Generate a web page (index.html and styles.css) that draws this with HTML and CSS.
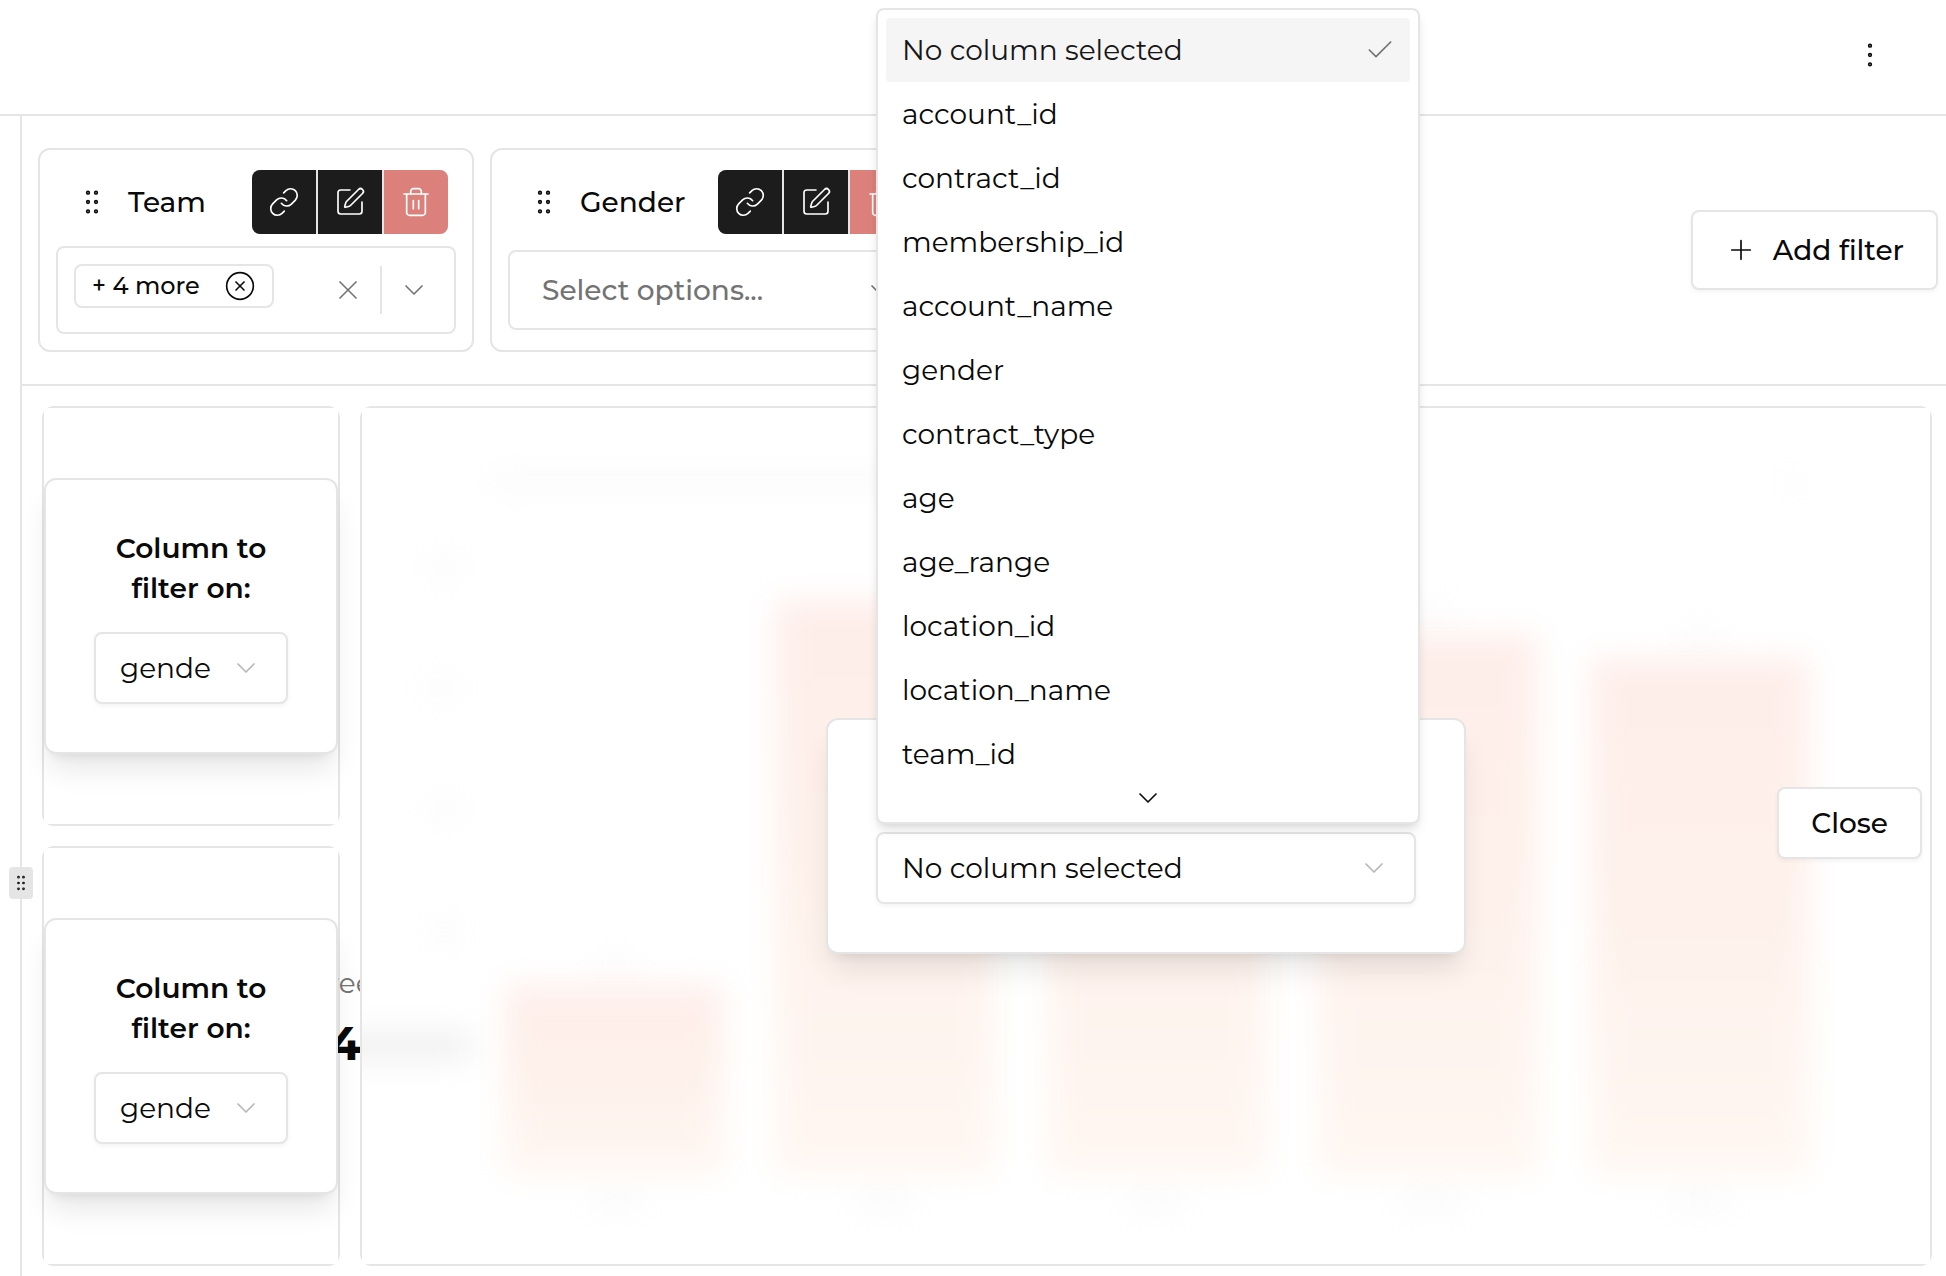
FILE: index.html
```html
<!DOCTYPE html>
<html lang="en">
<head>
<meta charset="utf-8">
<meta name="viewport" content="width=device-width, initial-scale=1">
<title>Dashboard filters</title>
<link rel="stylesheet" href="styles.css">
</head>
<body>
<svg class="sprite" aria-hidden="true">
  <symbol id="grip" viewBox="0 0 24 24"><circle cx="9" cy="12" r="1"/><circle cx="9" cy="5" r="1"/><circle cx="9" cy="19" r="1"/><circle cx="15" cy="12" r="1"/><circle cx="15" cy="5" r="1"/><circle cx="15" cy="19" r="1"/></symbol>
  <symbol id="more" viewBox="0 0 24 24"><circle cx="12" cy="12" r="1"/><circle cx="12" cy="5" r="1"/><circle cx="12" cy="19" r="1"/></symbol>
  <symbol id="link" viewBox="0 0 24 24"><path d="M10 13a5 5 0 0 0 7.54.54l3-3a5 5 0 0 0-7.07-7.07l-1.72 1.71"/><path d="M14 11a5 5 0 0 0-7.54-.54l-3 3a5 5 0 0 0 7.07 7.07l1.71-1.71"/></symbol>
  <symbol id="edit" viewBox="0 0 24 24"><path d="M12 3H5a2 2 0 0 0-2 2v14a2 2 0 0 0 2 2h14a2 2 0 0 0 2-2v-7"/><path d="M18.375 2.625a1 1 0 0 1 3 3l-9.013 9.014a2 2 0 0 1-.853.505l-2.873.84a.5.5 0 0 1-.62-.62l.84-2.873a2 2 0 0 1 .506-.852z"/></symbol>
  <symbol id="trash" viewBox="0 0 24 24"><path d="M3 6h18"/><path d="M19 6v14c0 1-1 2-2 2H7c-1 0-2-1-2-2V6"/><path d="M8 6V4c0-1 1-2 2-2h4c1 0 2 1 2 2v2"/><path d="M10 11v6"/><path d="M14 11v6"/></symbol>
  <symbol id="down" viewBox="0 0 24 24"><path d="m6 9 6 6 6-6"/></symbol>
  <symbol id="cross" viewBox="0 0 24 24"><path d="M18 6 6 18"/><path d="m6 6 12 12"/></symbol>
  <symbol id="circle-cross" viewBox="0 0 24 24"><circle cx="12" cy="12" r="10"/><path d="m15 9-6 6"/><path d="m9 9 6 6"/></symbol>
  <symbol id="plus" viewBox="0 0 24 24"><path d="M5 12h14"/><path d="M12 5v14"/></symbol>
  <symbol id="check" viewBox="0 0 24 24"><path d="M20 6 9 17l-5-5"/></symbol>
</svg>

<header class="topbar">
  <button class="icon-button" type="button" aria-label="More options"><svg class="icon"><use href="#more"/></svg></button>
</header>

<div class="shell">
  <aside class="rail">
    <button class="rail-handle" type="button" aria-label="Resize sidebar"><svg class="icon icon-small"><use href="#grip"/></svg></button>
  </aside>

  <main class="main">
    <section class="filters">
      <article class="filter filter-team">
        <div class="filter-head">
          <button class="icon-button" type="button" aria-label="Reorder Team"><svg class="icon"><use href="#grip"/></svg></button>
          <h2 class="filter-title">Team</h2>
          <div class="actions">
            <button class="action" type="button" aria-label="Link"><svg class="icon"><use href="#link"/></svg></button>
            <button class="action" type="button" aria-label="Edit"><svg class="icon"><use href="#edit"/></svg></button>
            <button class="action action-delete" type="button" aria-label="Delete"><svg class="icon"><use href="#trash"/></svg></button>
          </div>
        </div>
        <div class="multi multi-filled">
          <span class="tag">+ 4 more
            <button class="icon-button" type="button" aria-label="Remove 4 more"><svg class="icon"><use href="#circle-cross"/></svg></button>
          </span>
          <button class="icon-button muted multi-clear" type="button" aria-label="Clear"><svg class="icon"><use href="#cross"/></svg></button>
          <span class="divider"></span>
          <button class="icon-button muted" type="button" aria-label="Open Team options"><svg class="icon"><use href="#down"/></svg></button>
        </div>
      </article>

      <article class="filter filter-gender">
        <div class="filter-head">
          <button class="icon-button" type="button" aria-label="Reorder Gender"><svg class="icon"><use href="#grip"/></svg></button>
          <h2 class="filter-title">Gender</h2>
          <div class="actions">
            <button class="action" type="button" aria-label="Link"><svg class="icon"><use href="#link"/></svg></button>
            <button class="action" type="button" aria-label="Edit"><svg class="icon"><use href="#edit"/></svg></button>
            <button class="action action-delete" type="button" aria-label="Delete"><svg class="icon"><use href="#trash"/></svg></button>
          </div>
        </div>
        <button class="multi multi-empty" type="button">
          <span>Select options...</span>
          <svg class="icon"><use href="#down"/></svg>
        </button>
      </article>

      <button class="button button-tall" type="button"><svg class="icon"><use href="#plus"/></svg>Add filter</button>
    </section>

    <section class="board">
      <article class="cell">
        <div class="cell-body">
          <div class="picker">
            <label class="picker-label" for="column-a">Column to filter on:</label>
            <div class="select">
              <select id="column-a"><option>gende</option></select>
              <svg class="icon"><use href="#down"/></svg>
            </div>
          </div>
        </div>
      </article>

      <article class="cell cell-second">
        <div class="cell-body">
          <div class="metric"><span class="metric-name">ree</span><strong class="metric-value">4</strong></div>
          <div class="picker">
            <label class="picker-label" for="column-b">Column to filter on:</label>
            <div class="select">
              <select id="column-b"><option>gende</option></select>
              <svg class="icon"><use href="#down"/></svg>
            </div>
          </div>
        </div>
      </article>

      <article class="cell cell-chart">
        <div class="cell-body">
          <svg class="chart" viewBox="0 0 1568 856" preserveAspectRatio="none" aria-hidden="true">
            <defs>
              <linearGradient id="bar" x1="0" y1="0" x2="0" y2="1"><stop offset="0" stop-color="#feeeea"/><stop offset=".4" stop-color="#fef0ea"/><stop offset="1" stop-color="#fff7f2"/></linearGradient>
            </defs>
            <g fill="#fafafa">
              <rect x="130" y="64" width="420" height="18"/>
              <rect x="1420" y="64" width="16" height="18"/>
              <rect x="66" y="148" width="32" height="20"/><rect x="64" y="270" width="32" height="20"/>
              <rect x="68" y="392" width="30" height="20"/><rect x="68" y="514" width="30" height="20"/>
              <rect x="228" y="780" width="52" height="22"/><rect x="496" y="780" width="52" height="22"/>
              <rect x="768" y="780" width="52" height="22"/><rect x="1040" y="780" width="60" height="22"/>
              <rect x="1308" y="780" width="60" height="22"/>
              <rect x="236" y="548" width="36" height="20"/><rect x="1048" y="196" width="36" height="20"/><rect x="1320" y="218" width="36" height="20"/>
            </g>
            <rect x="-40" y="624" width="150" height="28" fill="#f0f0f0"/>
            <g fill="url(#bar)">
              <rect x="143" y="577" width="218" height="190"/>
              <rect x="414" y="192" width="218" height="575"/>
              <rect x="686" y="180" width="218" height="587"/>
              <rect x="957" y="226" width="218" height="541"/>
              <rect x="1229" y="250" width="218" height="517"/>
            </g>
          </svg>
          <div class="picker picker-wide">
            <label class="picker-label" for="column-c">Column to filter on:</label>
            <div class="select">
              <select id="column-c"><option>No column selected</option></select>
              <svg class="icon"><use href="#down"/></svg>
              <div class="menu">
                <ul class="menu-list" role="listbox" aria-label="Columns">
                  <li class="menu-item is-active" role="option" aria-selected="true">No column selected<svg class="icon"><use href="#check"/></svg></li>
                  <li class="menu-item" role="option">account_id</li>
                  <li class="menu-item" role="option">contract_id</li>
                  <li class="menu-item" role="option">membership_id</li>
                  <li class="menu-item" role="option">account_name</li>
                  <li class="menu-item" role="option">gender</li>
                  <li class="menu-item" role="option">contract_type</li>
                  <li class="menu-item" role="option">age</li>
                  <li class="menu-item" role="option">age_range</li>
                  <li class="menu-item" role="option">location_id</li>
                  <li class="menu-item" role="option">location_name</li>
                  <li class="menu-item" role="option">team_id</li>
                </ul>
                <button class="menu-more" type="button" aria-label="Scroll down"><svg class="icon"><use href="#down"/></svg></button>
              </div>
            </div>
          </div>
          <button class="button button-close" type="button">Close</button>
        </div>
      </article>
    </section>
  </main>
</div>
</body>
</html>
```
FILE: styles.css
```css
:root {
  --line: #e5e5e5;
  --text: #0a0a0a;
  --muted: #737373;
  --shadow-small: 0 2px 4px rgba(0, 0, 0, 0.05);
}

*, *::before, *::after { box-sizing: border-box; }

body {
  margin: 0;
  min-height: 100vh;
  display: flex;
  flex-direction: column;
  background: #fff;
  color: var(--text);
  font: 400 28px/40px Montserrat, Inter, "Liberation Sans", sans-serif;
}

button, select { font: inherit; color: inherit; }
button { padding: 0; border: 0; background: none; cursor: pointer; }

.sprite { position: absolute; width: 0; height: 0; }

.icon {
  display: block;
  flex: none;
  width: 32px;
  height: 32px;
  fill: none;
  stroke: currentColor;
  stroke-width: 1.25;
  stroke-linecap: round;
  stroke-linejoin: round;
}
.icon-small { width: 20px; height: 20px; }
.icon-button { flex: none; }
.muted { color: var(--muted); }

/* Top bar */
.topbar {
  flex: none;
  display: flex;
  align-items: center;
  justify-content: flex-end;
  height: 116px;
  padding: 0 60px 4px 0;
  border-bottom: 2px solid var(--line);
}

/* Frame */
.shell { flex: 1; display: flex; }
.rail {
  flex: none;
  position: relative;
  width: 22px;
  border-right: 2px solid var(--line);
}
.rail-handle {
  position: absolute;
  top: 751px;
  right: -13px;
  display: grid;
  place-items: center;
  width: 24px;
  height: 32px;
  border-radius: 4px;
  background: var(--line);
}
.main { flex: 1; min-width: 0; display: flex; flex-direction: column; }

/* Filter bar */
.filters {
  display: flex;
  align-items: center;
  gap: 16px;
  padding: 32px 8px 32px 16px;
  border-bottom: 2px solid var(--line);
}
.filter {
  align-self: stretch;
  flex: none;
  display: flex;
  flex-direction: column;
  min-height: 204px;
  padding: 20px 16px 16px;
  border: 2px solid var(--line);
  border-radius: 12px;
}
.filter-team { width: 436px; }
.filter-gender { width: 450px; }
.filter-head {
  display: flex;
  align-items: center;
  margin-bottom: 12px;
  padding: 0 8px 0 20px;
}
.filter-title { margin: 0 0 0 20px; font-size: 28px; font-weight: 500; }
.actions {
  display: flex;
  gap: 2px;
  margin-left: auto;
  overflow: hidden;
  border-radius: 8px;
  background: var(--line);
}
.action {
  display: grid;
  place-items: center;
  width: 64px;
  height: 64px;
  background: #1c1c1c;
  color: #fff;
}
.action-delete { background: #dc807b; }

.multi {
  display: flex;
  align-items: center;
  border: 2px solid var(--line);
  border-radius: 8px;
}
.multi-filled { height: 88px; padding: 0 24px 0 16px; }
.multi-empty {
  justify-content: space-between;
  height: 80px;
  margin: auto 0;
  padding: 0 24px 0 32px;
  color: var(--muted);
  font-weight: 500;
}
.tag {
  align-self: flex-start;
  display: flex;
  align-items: center;
  justify-content: space-between;
  width: 200px;
  height: 44px;
  margin-top: 16px;
  padding: 0 16px;
  border: 2px solid var(--line);
  border-radius: 8px;
  font-size: 24px;
  font-weight: 500;
}
.multi-clear { margin-left: auto; }
.divider { width: 2px; height: 48px; margin: 0 16px; background: var(--line); }

.button {
  display: flex;
  align-items: center;
  gap: 16px;
  height: 72px;
  padding: 0 32px;
  border: 2px solid var(--line);
  border-radius: 8px;
  background: #fff;
  box-shadow: var(--shadow-small);
  font-weight: 500;
}
.button-tall { height: 80px; margin-left: auto; }

/* Dashboard */
.board {
  flex: 1;
  display: grid;
  grid-template: 1fr 1fr / 298px 1fr;
  gap: 20px;
  padding: 20px 14px 10px 20px;
}
.cell {
  display: flex;
  min-width: 0;
  min-height: 360px;
  border: 2px solid var(--line);
  border-radius: 12px;
}
.cell-second { grid-row: 2; }
.cell-chart { position: relative; grid-area: 1 / 2 / 3 / 3; }
.cell-body {
  position: relative;
  flex: 1;
  min-width: 0;
  display: grid;
  align-items: center;
  background: #fff;
}

.metric {
  position: absolute;
  top: 115px;
  left: 284px;
  display: flex;
  flex-direction: column;
}
.metric-name { color: var(--muted); }
.metric-value { font-size: 48px; line-height: 80px; }

.picker {
  position: relative;
  display: flex;
  flex-direction: column;
  gap: 24px;
  padding: 48px;
  border: 2px solid var(--line);
  border-radius: 12px;
  background: #fff;
  box-shadow: 0 20px 30px -6px rgba(0, 0, 0, 0.1), 0 8px 12px -8px rgba(0, 0, 0, 0.1);
}
.picker-wide { width: 640px; justify-self: center; }
.picker-label { font-weight: 600; text-align: center; }

.select { position: relative; display: grid; align-items: center; }
.select > select, .select > .icon { grid-area: 1 / 1; }
.select > select {
  width: 100%;
  height: 72px;
  padding: 0 56px 0 24px;
  appearance: none;
  border: 2px solid var(--line);
  border-radius: 8px;
  background: #fff;
  box-shadow: var(--shadow-small);
}
.select > .icon {
  z-index: 1;
  justify-self: end;
  margin-right: 26px;
  color: #b5b5b5;
  pointer-events: none;
}

/* Blurred chart behind the picker */
.chart {
  position: absolute;
  inset: 0;
  width: 100%;
  height: 100%;
  overflow: hidden;
}
.chart > g, .chart > rect { filter: blur(15px); }
.cell-chart .cell-body > .picker, .cell-chart .cell-body > .button { grid-area: 1 / 1; }
.button-close { position: relative; justify-self: end; margin: 0 8px 26px 0; }

/* Open list of columns */
.menu {
  position: absolute;
  z-index: 2;
  bottom: calc(100% + 8px);
  left: 0;
  width: 544px;
  padding: 8px 8px 12px;
  border: 2px solid var(--line);
  border-radius: 8px;
  background: #fff;
  box-shadow: 0 8px 12px -2px rgba(0, 0, 0, 0.1), 0 4px 8px -4px rgba(0, 0, 0, 0.1);
}
.menu-list { margin: 0; padding: 0; list-style: none; }
.menu-item {
  display: flex;
  align-items: center;
  justify-content: space-between;
  height: 64px;
  padding: 0 14px 0 16px;
  border-radius: 4px;
}
.menu-item.is-active { background: #f5f5f5; color: #171717; }
.menu-item .icon { color: var(--muted); }
.menu-more { display: grid; place-items: center; align-content: center; width: 100%; height: 24px; }
```
